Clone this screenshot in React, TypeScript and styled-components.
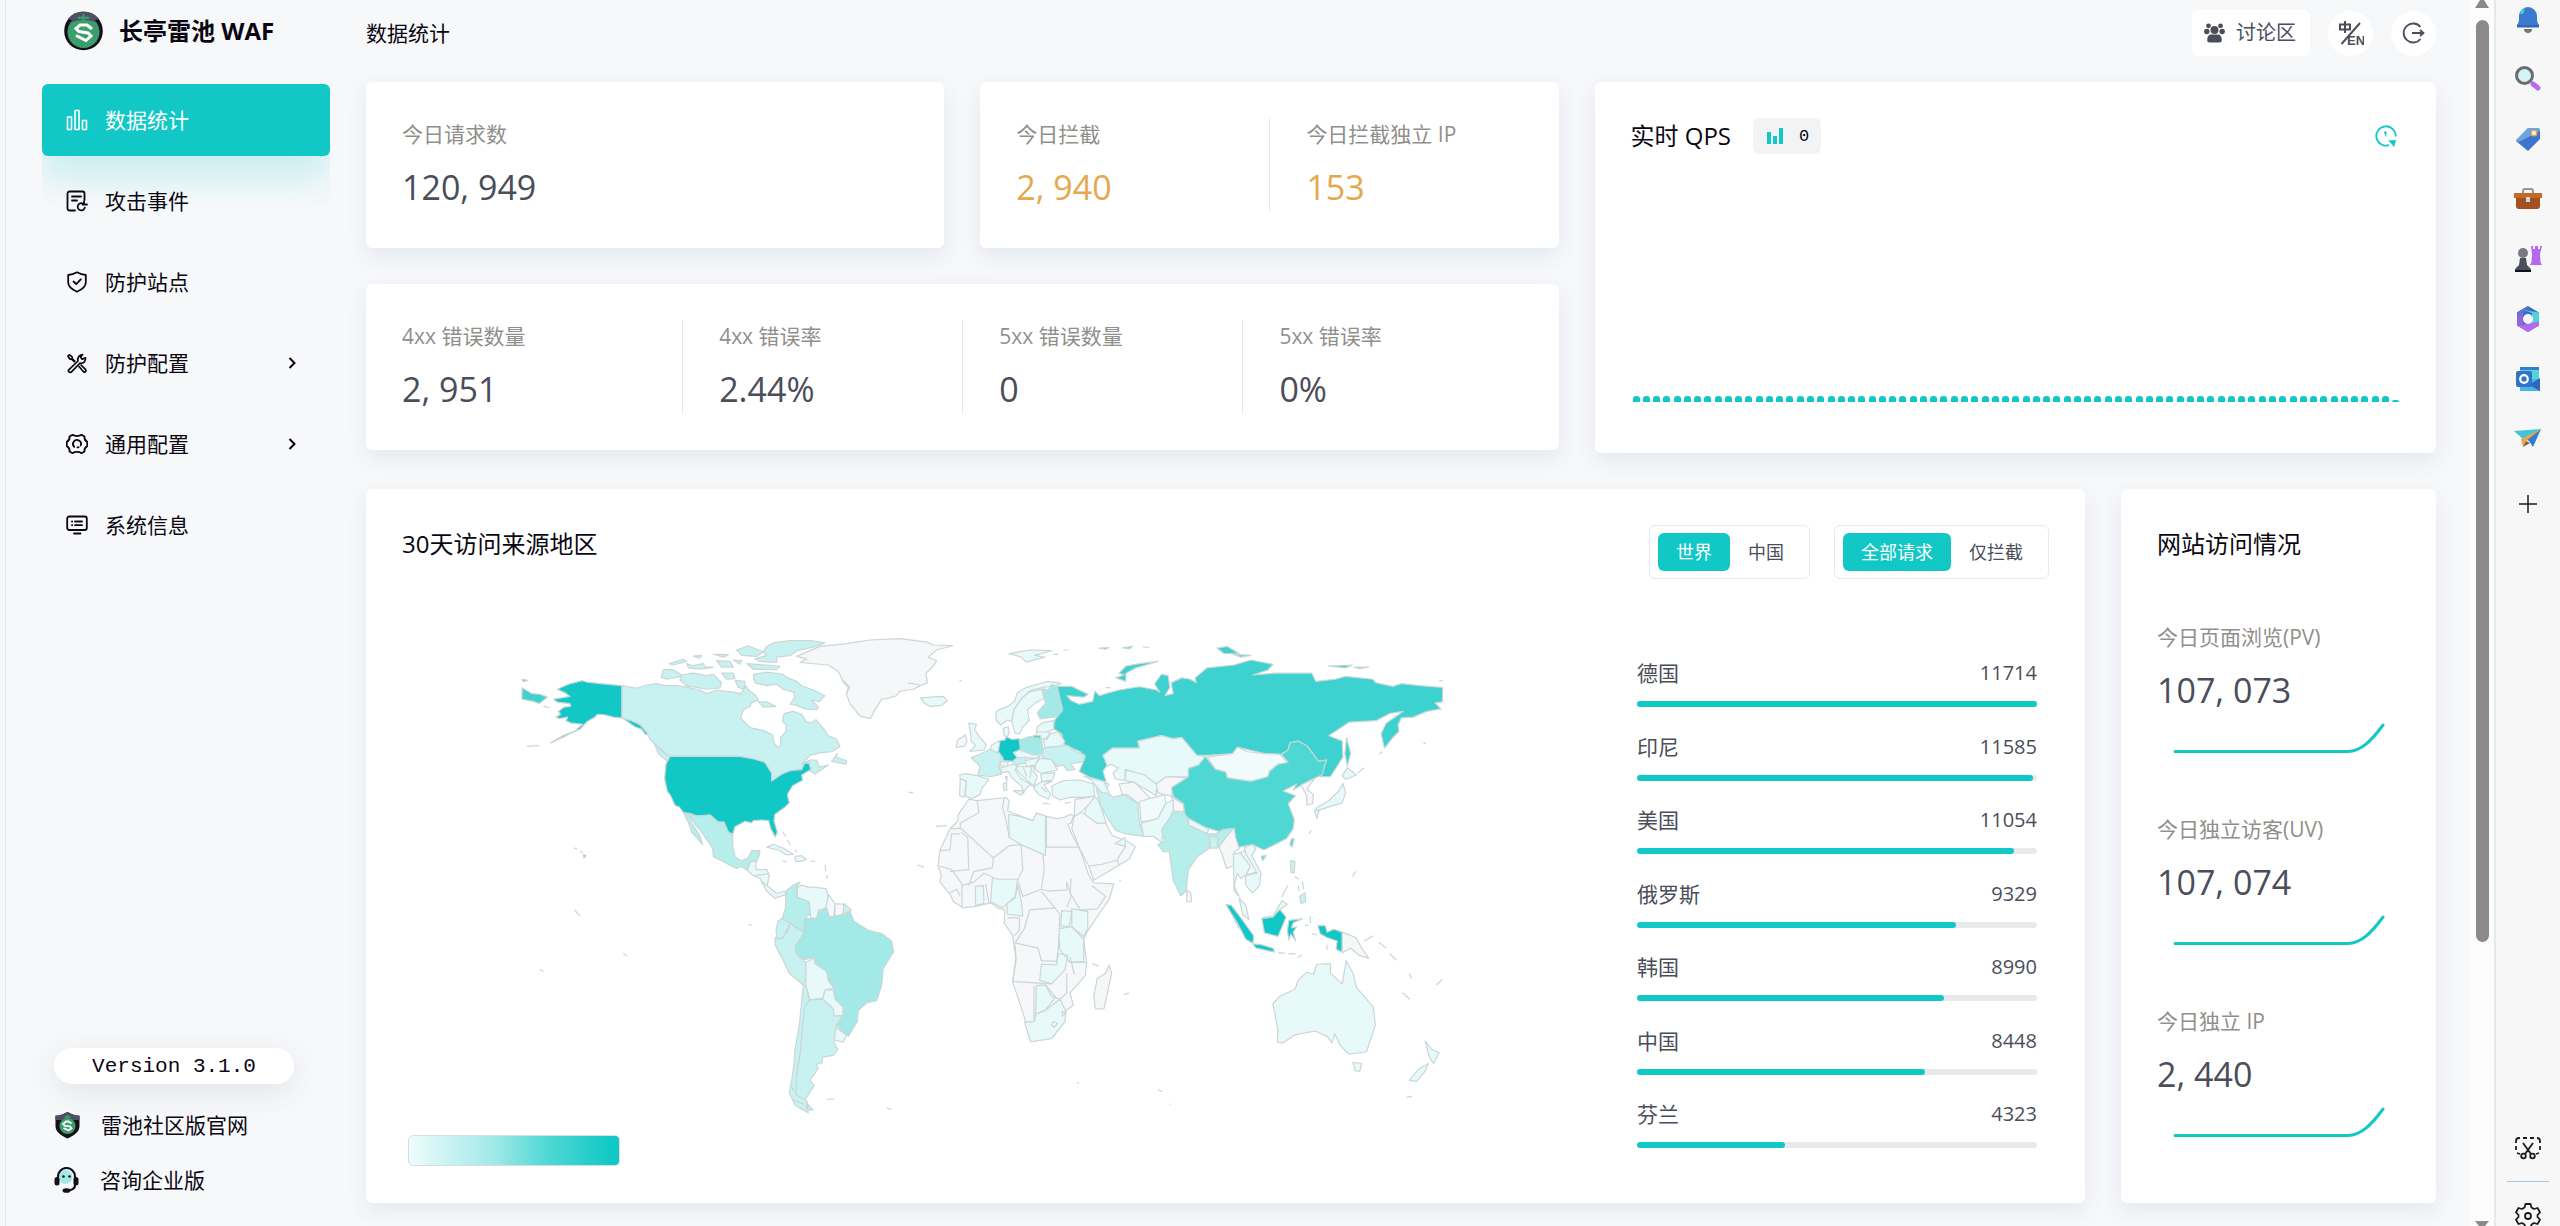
import React from "react";
import styled, { createGlobalStyle } from "styled-components";

const teal = "#11c8c6";
const ink = "#4b4e5a";
const sans = `"Open Sans", "Noto Sans CJK SC", sans-serif`;

const GlobalStyle = createGlobalStyle`
  *, *::before, *::after { box-sizing: border-box; }
  body { margin: 0; overflow: hidden; background: #f7f8fa; color: #0b0712; font-family: ${sans}; font-size: 21px; }
  button { font: inherit; color: inherit; background: none; border: 0; padding: 0; cursor: pointer; }
  a { color: inherit; text-decoration: none; }
  h1, h2, p, dl, dt, dd, ul { margin: 0; padding: 0; font-weight: 400; }
  ul { list-style: none; }
  svg { display: block; flex: none; }
`;

const Shell = styled.div`
  height: 100vh;
  display: grid;
  grid-template-columns: 325px minmax(0, 1fr) 24px 66px;
  border-left: 5px solid #f7f7f7;
  overflow: hidden;
`;

const Sidebar = styled.aside`
  display: flex;
  flex-direction: column;
  height: 100vh;
  padding: 11px 0 26px 36px;
  border-left: 1px solid #e1e8ed;
`;

const Brand = styled.a`
  display: flex;
  align-items: center;
  gap: 16px;
  height: 40px;
  margin: 0 0 33px 22px;
  font-size: 24px;
  line-height: 32px;
  font-weight: 700;
`;

const Nav = styled.nav`
  display: flex;
  flex-direction: column;
  gap: 9px;
  overflow: hidden;
`;

const NavItem = styled.button<{ $active?: boolean }>`
  display: flex;
  align-items: center;
  gap: 17px;
  height: 72px;
  padding: 0 30px 0 24px;
  border-radius: 6px;
  line-height: 32px;
  text-align: left;
  color: ${(p) => (p.$active ? "#fff" : "#0b0712")};
  background: ${(p) => (p.$active ? teal : "transparent")};
  box-shadow: ${(p) => (p.$active ? "0 22px 36px rgba(17, 200, 198, 0.2)" : "none")};
`;

const NavLabel = styled.span`
  flex: 1;
`;

const SideFoot = styled.div`
  display: flex;
  flex-direction: column;
  gap: 15px;
  margin: auto 36px 0 12px;
`;

const Version = styled.button`
  height: 36px;
  margin-bottom: 6px;
  border-radius: 18px;
  background: #fff;
  box-shadow: 0 8px 30px rgba(30, 70, 100, 0.1);
  font-family: "Liberation Mono", monospace;
  font-size: 21px;
  line-height: 38px;
`;

const FootLink = styled.a`
  display: flex;
  align-items: center;
  gap: 20px;
  height: 40px;
  line-height: 38px;
`;

const Main = styled.main`
  padding: 10px 34px 0 36px;
  height: 100vh;
  overflow: hidden;
`;

const TopBar = styled.header`
  display: flex;
  align-items: center;
  gap: 18px;
  height: 46px;
  margin-bottom: 26px;
`;

const PageTitle = styled.h1`
  flex: 1;
  font-size: 21px;
  line-height: 32px;
`;

const Forum = styled.button`
  display: flex;
  align-items: center;
  gap: 11px;
  height: 46px;
  padding: 0 14px 0 12px;
  border-radius: 6px;
  background: #fff;
  color: ${ink};
  font-size: 20px;
  line-height: 32px;
`;

const RoundButton = styled.button`
  display: grid;
  place-items: center;
  width: 45px;
  height: 45px;
  border-radius: 50%;
  background: #fff;
`;

const Grid = styled.div`
  display: grid;
  grid-template-columns: repeat(12, minmax(0, 1fr));
  gap: 36px;
  align-items: start;
`;

const Span = styled.div<{ $cols: number }>`
  grid-column: span ${(p) => p.$cols};
`;

const StatGrid = styled.div`
  display: grid;
  grid-template-columns: 1fr 1fr;
  gap: 36px;
`;

const Card = styled.section<{ $wide?: boolean }>`
  grid-column: ${(p) => (p.$wide ? "1 / -1" : "auto")};
  padding: 36px;
  border-radius: 6px;
  background: #fff;
  box-shadow: 0 8px 22px rgba(30, 70, 100, 0.09);
`;

const Stats = styled.dl`
  display: grid;
  grid-auto-flow: column;
  grid-auto-columns: minmax(0, 1fr);
`;

const StatCell = styled.div`
  & + & {
    padding-left: 36px;
    border-left: 1px solid #e7e9ec;
  }
`;

const StatLabel = styled.dt`
  color: #8f8f8c;
  font-size: 21px;
  line-height: 32px;
`;

const StatValue = styled.dd<{ $warn?: boolean }>`
  margin-top: 12px;
  color: ${(p) => (p.$warn ? "#e5a84e" : ink)};
  font-size: 34px;
  line-height: 50px;
`;

const QpsCard = styled(Card)`
  display: flex;
  flex-direction: column;
  min-height: 371px;
  padding-bottom: 51px;
`;

const CardTitle = styled.h2`
  font-size: 24px;
  line-height: 38px;
`;

const QpsHead = styled.div`
  display: flex;
  align-items: center;
  gap: 22px;
  height: 36px;
  padding-right: 3px;
`;

const QpsChip = styled.span`
  display: flex;
  align-items: center;
  gap: 16px;
  height: 36px;
  margin-right: auto;
  padding: 0 12px 0 14px;
  border-radius: 6px;
  background: #f2f3f5;
  font-family: "Liberation Mono", monospace;
  font-size: 17px;
`;

const QpsBars = styled.div`
  display: flex;
  justify-content: space-between;
  align-items: flex-end;
  margin-top: auto;
  padding-left: 2px;
`;

const QpsBar = styled.i<{ $last: boolean }>`
  width: 7px;
  height: ${(p) => (p.$last ? 2 : 6)}px;
  border-radius: 3px 3px 0 0;
  background: ${teal};
`;

const MapHead = styled.div`
  display: flex;
  align-items: flex-start;
  gap: 24px;
  height: 54px;
  margin-bottom: 31px;
`;

const MapTitle = styled(CardTitle)`
  flex: 1;
`;

const Segment = styled.div`
  display: flex;
  height: 54px;
  padding: 7px 7px 7px 8px;
  border: 1px solid #e7e9ec;
  border-radius: 6px;
`;

const SegmentButton = styled.button<{ $on?: boolean }>`
  height: 38px;
  padding: 0 18px;
  border-radius: 6px;
  font-size: 18px;
  line-height: 34px;
  color: ${(p) => (p.$on ? "#fff" : ink)};
  background: ${(p) => (p.$on ? teal : "transparent")};
`;

const MapBody = styled.div`
  display: flex;
  gap: 36px;
`;

const MapPane = styled.div`
  flex: 1;
  min-width: 0;
  & > svg {
    width: 100%;
    height: auto;
  }
`;

const Legend = styled.div`
  width: 212px;
  height: 31px;
  margin: 20px 0 1px 6px;
  border: 1px solid #d5dfe0;
  border-radius: 5px;
  background: linear-gradient(90deg, #eefcfc, #a2e9e8 40%, #50d8d4 66%, ${teal} 96%);
`;

const Ranking = styled.ul`
  display: flex;
  flex-direction: column;
  justify-content: space-between;
  width: 412px;
  padding: 47px 12px 19px 0;
`;

const RankText = styled.div`
  display: flex;
  justify-content: space-between;
  margin-bottom: 12px;
  color: ${ink};
  line-height: 32px;
`;

const RankCount = styled.span`
  font-size: 20px;
`;

const Track = styled.div`
  height: 6px;
  border-radius: 3px;
  background: #e7e9ed;
`;

const Fill = styled.div`
  height: 6px;
  border-radius: 3px;
  background: ${teal};
`;

const VisitCard = styled(Card)`
  padding-bottom: 62px;
`;

const VisitList = styled.dl`
  display: flex;
  flex-direction: column;
  gap: 56px;
  margin-top: 58px;
`;

const Spark = styled.svg`
  width: 100%;
  height: auto;
  margin-top: 6px;
`;

const ScrollBar = styled.div`
  display: flex;
  flex-direction: column;
  align-items: center;
  height: 100vh;
  background: #fcfcfc;
`;

const Thumb = styled.div`
  flex: 922;
  width: 13px;
  margin-top: 12px;
  border-radius: 7px;
  background: #8b8989;
`;

const ScrollSpace = styled.div`
  flex: 279;
`;

const Rail = styled.aside`
  display: flex;
  flex-direction: column;
  align-items: center;
  gap: 32px;
  height: 100vh;
  padding-top: 5px;
  border-left: 2px solid #e4e9ef;
  background: #f7f7f7;
`;

const RailButton = styled.button`
  display: grid;
  place-items: center;
  width: 28px;
  height: 28px;
`;

const RailFoot = styled.div`
  display: flex;
  flex-direction: column;
  align-items: center;
  gap: 20px;
  margin: auto 0 -4px;
`;

const RailLine = styled.div`
  width: 42px;
  height: 1px;
  background: #a5cbd8;
`;

/* ---------- icons ---------- */

const Icon = ({ size = 22, children, sw = 1.8 }: { size?: number; sw?: number; children: React.ReactNode }) => (
  <svg width={size} height={size} viewBox="0 0 22 22" fill="none" stroke="currentColor" strokeWidth={sw} strokeLinejoin="round" strokeLinecap="round" aria-hidden="true">
    {children}
  </svg>
);

const ChartIcon = () => (
  <Icon sw={1.6}><path d="M1.5 8h4v12.500h-4zM9 1.500h4v19H9zM16.500 11.500h4v9h-4z" /></Icon>
);
const EventIcon = () => (
  <Icon>
    <path d="M9 20.500H3.500a2 2 0 0 1-2-2v-15a2 2 0 0 1 2-2h13a2 2 0 0 1 2 2V10M6 6.500h9M6 10.500h5" />
    <path d="M17 13.600a3.600 3.600 0 1 0 1.800 4M16.500 14.500h4.500M18 11.500v3" />
  </Icon>
);
const ShieldIcon = () => (
  <Icon><path d="M11 1.300c3 1.700 5.500 2.500 8.800 2.700v7.500c0 4-3.800 7-8.800 9.300-5-2.300-8.800-5.300-8.800-9.300V4c3.300-.2 5.800-1 8.800-2.700zM7.500 10.500l2.700 2.600 4.600-4.800" /></Icon>
);
const ToolsIcon = () => (
  <Icon sw={1.7}>
    <path d="M2.500 18.200 12 9c-.8-3 .9-6.300 4.600-6.500l-2 2.800 1.500 2 3.400-1.400c.6 3.300-2.300 6-5.500 5.200L5 20.300c-1.700.5-3-.8-2.500-2.100z" />
    <path d="M8.800 9.200 6.500 7 6 4.600 3.300 2.800 2 4.200l1.600 2.600 2.500.5 2.200 2.300M13 14.500l4.500 5.300c1.500 1 3.200-.6 2.200-2.200L15 13" />
  </Icon>
);
const HexIcon = () => (
  <Icon>
    <path d="M6.500 1.800c2.200 1.700 6.800 1.700 9 0l3 1.700c-.3 2.600.4 4.200 2.700 5.400v4.200c-2.300 1.200-3 2.800-2.700 5.400l-3 1.700c-2.200-1.700-6.800-1.700-9 0l-3-1.700c.3-2.600-.4-4.200-2.700-5.400V8.900c2.300-1.200 3-2.800 2.700-5.400z" />
    <path d="M8.200 13.800a4 4 0 1 1 6.500-1.300M11.500 14.500a3 3 0 0 0 1.200-.4" />
  </Icon>
);
const SystemIcon = () => (
  <Icon>
    <rect x="1.200" y="2.500" width="19.600" height="13.500" rx="2" />
    <path d="M6 7.500h.2M9 7.500h7M6 11.200h.2M9 11.200h7M8 19.500h6.500" />
  </Icon>
);
const Chevron = () => (
  <svg width="16" height="16" viewBox="0 0 16 16" fill="none" stroke="currentColor" strokeWidth="2" aria-hidden="true"><path d="m5.500 3 5 5-5 5" /></svg>
);
const LogoIcon = () => (
  <svg width="39" height="40" viewBox="0 0 39 40" aria-hidden="true">
    <circle cx="19.500" cy="20" r="19.300" fill="#12101a" />
    <path d="M4 8C9 2 14 .8 19.500.8S30 2 35 8l-7 2H11z" fill="#4c5060" />
    <circle cx="19.500" cy="21" r="16" fill="#3a9f6c" />
    <path d="M5 13C9 7 14 5.500 19.500 5.500S30 7 34 13c-4-3-9-4-14.500-4S9 10 5 13z" fill="#4c5060" />
    <path d="M19.500 3v9M14 7h11" stroke="#3a9f6c" strokeWidth="2" />
    <path d="M28 18l-5-4h-7l-4 3.500 3 3 9 1.500 3 3-5 4.500-10-5" fill="none" stroke="#fff" strokeWidth="3" />
  </svg>
);
const BadgeIcon = () => (
  <svg width="27" height="28" viewBox="0 0 27 28" aria-hidden="true">
    <path d="M13.500 1c4 2.500 8 3.500 12 3.800V15c0 6-6 10-12 12.500C7.500 25 1.500 21 1.500 15V4.800c4-.3 8-1.300 12-3.800z" fill="#14111c" />
    <path d="M13.500 1c4 2.500 8 3.500 12 3.800V9h-24V4.800c4-.3 8-1.300 12-3.800z" fill="#4c5060" />
    <circle cx="13.500" cy="15" r="8" fill="#3a9f6c" />
    <path d="M13.500 4v4M10.500 6h6" stroke="#3a9f6c" strokeWidth="1.500" />
    <path d="M17.500 12.500l-3-2h-2.500l-3 2.500 2 1.800 5 .5 1.500 2-3 2.200-5-2.500" fill="none" stroke="#fff" strokeWidth="1.800" />
  </svg>
);
const HeadsetIcon = () => (
  <svg width="26" height="27" viewBox="0 0 26 27" fill="none" aria-hidden="true">
    <circle cx="11.500" cy="10" r="7" fill="#a2e9e8" />
    <path d="M4 12V9.500a8.500 8.500 0 0 1 17 0V18c0 3-2.500 5-7 5.500" stroke="#14111c" strokeWidth="2.200" />
    <rect x="0.500" y="10" width="5" height="8.500" rx="2.500" fill="#14111c" />
    <rect x="19.500" y="10" width="5" height="8.500" rx="2.500" fill="#14111c" />
    <ellipse cx="12.500" cy="23.500" rx="4" ry="2.300" fill="#14111c" />
    <circle cx="9.500" cy="9.500" r="1.300" fill="#14111c" /><circle cx="15.500" cy="9.500" r="1.300" fill="#14111c" />
  </svg>
);
const PeopleIcon = () => (
  <svg width="21" height="20" viewBox="0 0 21 20" fill={ink} aria-hidden="true">
    <circle cx="4.500" cy="2.800" r="2.400" /><circle cx="16.500" cy="2.800" r="2.400" /><circle cx="10.500" cy="7" r="4" />
    <circle cx="2.800" cy="8.500" r="2.700" /><circle cx="18.200" cy="8.500" r="2.700" />
    <path d="M6 11.500h9c2 1 2.800 3 2.800 5.500 0 1.800-1 2.500-2.500 2.500H5.700c-1.500 0-2.500-.7-2.500-2.500 0-2.500.8-4.500 2.800-5.500z" />
  </svg>
);
const LangIcon = () => (
  <svg width="26" height="26" viewBox="0 0 26 26" aria-hidden="true">
    <path d="M2 4.500h10v5H2zM7 1v12M3.500 24 22 3" fill="none" stroke={ink} strokeWidth="2" />
    <text x="9" y="24.500" fill={ink} fontFamily="Liberation Sans" fontWeight="700" fontSize="13">EN</text>
  </svg>
);
const ExitIcon = () => (
  <svg width="23" height="22" viewBox="0 0 23 22" fill="none" stroke={ink} strokeWidth="1.800" aria-hidden="true">
    <path d="M18.500 5a9.500 9.500 0 1 0 0 12M10 11h11M18 8l3.500 3-3.500 3" />
  </svg>
);
const RefreshIcon = () => (
  <svg width="22" height="22" viewBox="0 0 22 22" fill="none" stroke={teal} strokeWidth="1.800" aria-hidden="true">
    <path d="M14 20.200A9.700 9.700 0 1 1 20.700 11.500" />
    <path d="M8.800 6.500h2.800l-.6 6z" fill={teal} stroke="none" />
    <path d="M13 15.500l8-.5-2 7.500-1.800-3z" fill={teal} stroke="none" />
  </svg>
);
const MiniBars = () => (
  <svg width="16" height="16" viewBox="0 0 16 16" fill={teal} aria-hidden="true"><path d="M0 4h4v12H0zM6 8h4v8H6zM12 0h4v16h-4z" /></svg>
);

const apps: { name: string; art: React.ReactNode }[] = [
  { name: "通知", art: <><path d="M3 20c2-2 2-5 2-9a9 9 0 0 1 18 0c0 4 0 7 2 9z" fill="#3a7bd0" /><path d="M3 20h22v2.500H3z" fill="#2f67c0" /><path d="M6 9a8 8 0 0 1 5-6L9 9z" fill="#3fd0cf" /><path d="M10 24h8a4 4 0 0 1-8 0z" fill="#777" /></> },
  { name: "搜索", art: <><path d="m19 19 5 4" stroke="#b568f0" strokeWidth="5" strokeLinecap="round" /><circle cx="10.500" cy="10.500" r="8" fill="#d3f3f5" stroke="#6c6b70" strokeWidth="3" /></> },
  { name: "购物", art: <><path d="M14 3h9a3 3 0 0 1 3 3v8L14 26 2 16z" fill="#3a76cc" /><path d="M14 3h9a3 3 0 0 1 3 3L5 17l-3-2z" fill="#6ea4de" /><rect x="17.500" y="5.500" width="5" height="5" rx="1" fill="#fff" stroke="#e5a84e" strokeWidth="1.500" /></> },
  { name: "工具", art: <><path d="M9 9V6c0-1 1-2 2-2h6c1 0 2 1 2 2v3" fill="none" stroke="#8f9aa3" strokeWidth="2" /><path d="M0 8h28v5H0z" fill="#c06a28" /><path d="M2 13h24v8a3 3 0 0 1-3 3H5a3 3 0 0 1-3-3z" fill="#a34f1f" /><rect x="12" y="12" width="4" height="5" fill="#bfe0ea" /></> },
  { name: "游戏", art: <><path d="M17 1h2v3h2V1h3v3h2V1h2l-2 8 .5 8 1.500 3H16l1.500-3L18 9z" fill="#b568f0" /><circle cx="9" cy="8" r="5" fill="#777a80" /><path d="M6 13h6l1 7 4 4v3H1v-3l4-4z" fill="#4b4e5c" /><path d="M1 25h16v2H1z" fill="#14111c" /></> },
  { name: "Microsoft 365", art: <><path d="M14 1 25 7.500v13L14 27 3 20.500v-13z" fill="#3a6fc8" /><path d="M14 1 3 7.500v13L9 22V8z" fill="#9366dc" /><path d="M14 1 3 7.500v6L12 5z" fill="#5f74d6" /><path d="M25 7.500v10l-7 1V8L10 5z" fill="#54cfdc" /><path d="m14 27 11-6.500v-4l-11 2-10 2.500z" fill="#b568f0" /><circle cx="14" cy="14" r="5" fill="#f7f7f7" /></> },
  { name: "Outlook", art: <><path d="M6 2h19v12H6z" fill="#54d5dc" /><path d="M6 2h19v3H6z" fill="#3a7bd0" /><path d="M6 14h20v12H6z" fill="#4ab4e4" /><path d="m26 13-11 7 11 6z" fill="#2f67c0" /><rect x="2" y="6" width="16" height="16" rx="2" fill="#2f74c8" /><circle cx="10" cy="14" r="3.800" fill="none" stroke="#fff" strokeWidth="2.200" /></> },
  { name: "Drop", art: <><path d="M0 6 27 4 9 14z" fill="#44c4d8" /><path d="m27 4-8 18-4-6-4-2z" fill="#3a7bd0" /><path d="M27 4 7 14l2 8 3-6z" fill="#e5a84e" /><path d="m9 22 3-6 4 2z" fill="#8c5a30" /></> },
];

/* ---------- world map ---------- */

const none = "#f5f7f9";
const t1 = "#e7f9f9";
const t2 = "#c8f2f1";
const mid = "#b6eeec";
const t3 = "#a2e9e8";
const ru = "#3dd2cf";
const cn = "#4fd7d3";

type Land = [string, string];

const americas: Land[] = [
  [teal, "M247 226L262 230 300 234 366 240V330L340 328 318 322 292 320 285 328 262 340 240 362 215 372 190 384 152 400 188 380 225 366 248 348 215 345 198 338 203 328 178 332 168 328 182 320 175 312 192 300 212 298 210 290 172 286 160 278 185 274 210 270 195 260 172 250 205 236Z"],
  [teal, "M366 330L395 338 420 350 448 378 436 376 425 362 405 355Z M250 712L258 716 252 722Z"],
  [ru, "M66 246L95 262 120 264 142 272 118 290 100 284 66 278Z M66 222L84 225 70 229Z"],
  [t2, "M366 240L390 244 410 247 440 238 470 234 495 240 530 240 560 244 600 252 620 262 650 252 700 258 722 262 738 240 746 252 768 268 775 280 755 288 750 298 730 308 722 330 740 348 752 358 790 365 818 378 822 400 832 412 842 410 842 385 858 368 860 352 848 340 852 318 880 312 905 320 918 340 934 345 948 335 975 365 985 380 1010 390 1020 410 995 425 960 428 930 435 905 460 930 448 950 448 958 468 985 462 945 487 930 478 928 455 915 458 905 475 870 478 815 507V485L795 455 765 446 720 438H510L496 428 470 408 450 390 440 370 420 348 395 338 366 330Z"],
  [t2, "M490 195L520 195 545 210 580 205 620 212 640 208 665 232 660 246 620 250 560 240 540 225 545 214 500 222 484 216Z"],
  [t2, "M760 208L800 202 850 208 858 216 890 228 905 240 940 252 975 268 958 285 935 280 955 300 950 308 915 305 890 295 870 292 885 272 882 258 850 250 830 236 800 240 765 232Z"],
  [t2, "M820 120L870 114 930 114 975 120 940 132 890 142 870 156 830 160 830 175 780 172 765 165 800 155 790 145 800 130Z M710 140L745 128 790 145 770 158 725 155Z"],
  [t2, "M740 178L800 182 840 186 830 195 760 194Z M560 178L580 184 610 178 615 188 640 188 600 194 565 190Z M508 178L550 166 560 172 520 182Z M640 152L685 153 670 160Z M650 170L690 172 700 188 665 188Z M665 205L700 205 705 220 680 222Z M705 225L735 228 732 250 715 245Z M580 157L605 155 600 163Z M775 285L800 285 828 298 790 300Z M1012 430L1008 440 1040 450 1038 460 995 452Z M462 400L480 418 505 440 505 454 475 430Z M700 168L725 170 720 180Z"],
  [teal, "M510 438H720L765 446 795 455 815 485V507L845 488 870 478 905 475 915 456 928 458 932 475 905 490 908 505 878 520 862 545 868 568 855 580 825 600 822 618 832 650 826 664 812 640 806 618 785 616 760 618 755 624 735 620 705 635 698 657 685 650 672 622 655 622 630 602 590 605 572 598 550 595 538 580 525 575 512 548 502 535 494 500 498 460Z"],
  [mid, "M550 595L590 605 630 602 655 622 672 622 685 650 698 657 698 690 706 720 725 730 745 722 755 702 780 702 778 715 768 735 750 732 742 757 725 746 710 752 680 738 640 718 638 695 605 650 585 628 568 600 575 625 600 660 608 685 575 650 565 622Z"],
  [t1, "M742 757L752 732H768L768 755H800L808 770 802 800 830 822 855 815 858 825 825 835 800 815 780 780 760 772Z M800 692L820 684 850 695 880 712 860 714 835 700Z M885 718L905 716 920 726 905 732 888 732Z M764 772L808 766 M782 786L802 800 M848 732L860 732 M932 732H945"],
  [mid, "M858 815L880 798 900 790 888 808 892 832 928 845 930 880 914 892 912 928 895 922 870 905 846 892 856 865Z"],
  [t1, "M892 806L905 798 925 804 940 804 978 808 985 830 978 862 955 870 950 892 932 890 928 845 892 832Z"],
  [none, "M985 825L1005 850 1002 888 988 888 978 862Z M1005 850L1032 852 1030 880 1005 885Z"],
  [t2, "M1032 850L1054 868 1045 882 1030 880Z"],
  [t2, "M846 892L870 905 865 925 848 945 832 950 828 925 835 898Z M870 905L895 922 912 928 905 945 885 970 890 992 908 1008 918 1015 918 1060 910 1078 868 1045 845 1000 825 965V945L848 948Z"],
  [t3, "M914 892H950L958 872 980 864 988 888 1030 882 1050 870 1062 900 1080 910 1105 925 1145 934 1175 955 1181 985 1150 1032 1145 1080 1130 1122 1100 1128 1075 1150 1072 1180 1045 1222 1010 1192 1030 1165 1030 1140 1005 1118 1002 1085 985 1062 980 1040 945 1015 942 1000 912 1008 890 992 885 970 905 945 912 925Z"],
  [t1, "M918 1015L942 1002 945 1018 980 1040 985 1065 1002 1088 975 1092 968 1115 930 1120 918 1080Z M975 1092H1000L1005 1118 1030 1140 1028 1163 1002 1165 1000 1145 968 1118Z M1005 1195L1040 1218 1030 1238 1002 1232Z"],
  [t2, "M930 1120L968 1118 1000 1145 1002 1165H1028L1008 1192 1002 1240 1014 1258 1000 1275 968 1280 966 1298 948 1300 955 1312 930 1345 942 1360 915 1400 885 1390 890 1330 902 1260 907 1190 912 1130Z M890 1400L915 1405 940 1428 900 1425Z"],
  [t2, "M910 1078L918 1080 928 1120 914 1140 907 1200 902 1260 890 1330 888 1385 920 1402 925 1436 885 1415 868 1380 876 1340 882 1300 885 1260 898 1190Z M870 1355L882 1375 M880 1400L912 1412 M922 1404L918 1426"],
  [none, "M890 158L960 130 1040 122 1110 112 1200 108 1282 118 1300 126 1358 128 1310 140 1285 160 1310 170 1300 185 1278 205 1282 232 1262 240 1240 250 1200 255 1190 268 1160 276 1145 278 1122 312 1112 332 1080 325 1050 290 1040 265 1045 245 1030 230 1015 200 985 182 900 175 920 165Z"],
  [t1, "M1262 275L1290 272 1330 270 1342 282 1325 295 1290 298 1275 290Z"],
  ["none", "M848 650L858 662 M862 672L872 686 M885 700L892 706 M975 742L978 760 M982 770L980 780 M222 694L232 698 M240 704L248 708 M745 908L755 912 M980 1398H1002 M1160 1422L1174 1427 M80 410L118 408 M130 298L150 301 M1226 538L1240 540 M1252 742L1272 748 M1308 634L1340 632 M120 1034L130 1040 M370 990L382 998 M1378 228L1386 226 M224 868L240 886 M1030 225L1050 245 1038 262 M1225 232L1260 238"],
];

const europe: Land[] = [
  [t1, "M48 125L60 118 85 108 105 92 112 68 140 52 175 42 205 34 243 40 225 48 190 52 150 62 125 85 102 120 95 155 82 150 62 165 48 150Z"],
  [t1, "M95 155L102 120 125 85 150 65 185 58 192 85 165 100 142 120 148 150 128 172 118 192 105 190Z"],
  [t3, "M188 56L205 60 215 44 232 50 240 85 248 118 232 140 180 147 172 128 196 100 192 78Z"],
  [t1, "M188 158L220 152 222 178 200 186 170 186 172 170Z M170 186L200 186 212 190 200 208 182 205 168 195Z M212 190L235 186 255 215 245 228 195 232 190 212Z"],
  [t3, "M118 210L150 200 184 206 190 250 160 255 118 240Z"],
  [ru, "M160 197H182V205L160 203Z"],
  [t1, "M70 175L85 170 88 190 80 202 72 195Z M35 225L58 212 60 235 50 248 32 238Z M98 248L120 240 160 255 185 255 170 265 110 262Z M135 272L180 262 165 285 140 290Z M60 275L85 275 82 290 62 288Z"],
  [teal, "M60 212L75 210 78 200 95 208 118 206 121 238 100 248 112 264 98 274 70 272 68 262 55 245Z"],
  [t2, "M98 274L110 264 138 262 135 280 100 284Z"],
  [t1, "M60 294L82 288 100 282 112 288 105 300 122 325 155 345 142 350 130 370 126 350 95 322 85 305 65 308Z M100 362L130 362 124 376Z M70 340L80 338 80 360 72 362Z M76 320L82 320 80 335Z"],
  [t1, "M112 288L140 290 165 290 160 305 172 318 165 340 160 348 132 322 110 300Z M165 285L180 265 215 268 232 300 185 310 168 302Z M182 312L225 308 218 330 185 335Z M160 350L185 335 215 335 192 345 212 372 205 388 178 375 165 360Z"],
  ["none", "M130 292L140 320 M155 292L150 325 M190 400L210 402 M255 400L272 396 M184 352L200 366"],
  [t2, "M190 235L245 228 262 226 290 246 315 255 310 275 272 282 285 298 262 302 250 285 232 290 215 270 188 262Z"],
  [t1, "M215 348L250 332 300 330 340 342 345 378 310 382 270 382 240 390 218 378Z M310 318L372 335 388 370 365 368 345 345 332 328Z"],
  [none, "M285 388L325 382 345 378 325 405 305 425 282 440Z"],
];

const eastern: Land[] = [
  [none, "M85 558L110 562 195 553 205 562 200 590 245 608 275 618 285 597 312 605 345 612 370 608 385 600 395 605 388 625 378 628 392 660 415 700 440 770 455 792 514 795 500 840 470 880 435 930 425 950 434 1015 430 1052 385 1100 394 1135 372 1150 370 1180 330 1228 268 1237 255 1185 240 1140 215 1070 225 1010 215 940 190 905 192 868 170 862 150 848 105 858 68 862 40 845 30 825 0 790 4 770 -6 745 0 700 30 640 52 620 55 600Z"],
  [t1, "M203 600L245 608 275 618 285 597 312 605V715L240 685 205 665Z M155 778L172 782 230 782 222 830 185 862 150 845Z M230 800L240 840 245 885 200 880 198 850 222 835Z M105 802L128 800 130 850 105 855Z M390 865L437 872 437 920 425 942 390 915Z M360 870L390 872 382 915 357 912Z M350 920L390 915 425 950 425 1012 385 1015 355 980Z M300 1020L345 1022 350 990 378 995 370 1035 330 1075 295 1065Z M285 1080L312 1078 342 1112 310 1150 283 1160Z"],
  [t1, "M250 1182L280 1180 283 1160 310 1150 355 1118 372 1150 370 1180 330 1228 268 1237Z"],
  [none, "M335 1180L348 1186 338 1196 330 1190Z M362 1152L372 1156 362 1165Z M265 868L340 862 355 880 350 975 345 1012 300 1010 290 975 222 960 250 920Z M500 1022L508 1045 485 1145 460 1145 455 1110 465 1060 490 1045Z"],
  ["none", "M62 640L158 722 205 688 240 685 M205 665L195 615 185 580 190 555 M62 650L82 665 85 755 30 760 M60 655L34 655 30 700 0 702 M110 562L115 595 60 625V640L30 640 M158 722L155 750 100 760 85 800 M240 685L245 755 230 785 M315 605V692H408 M305 715L308 755 300 810 245 830 232 790 M300 810L320 815 375 812V790L388 830 375 860 M388 780L385 820 415 868 465 865 490 830 450 800 M300 815L340 862 M222 965L225 1000 215 1068 330 1075 M278 1080V1180 M375 1045V1100L355 1118 330 1110 312 1078 M385 1015H432 M385 1000L398 1050 M-2 745L35 755 65 795 65 860 M65 800L100 790 130 765 155 775 M135 795L145 850 M200 890L235 890 235 925 220 940 M30 820L50 810 60 830"],
  [none, "M400 590L430 600 465 625 490 625 510 660 552 675 578 690 560 725 525 745 455 785 440 745 415 700 390 640Z M440 745L480 740 525 728 530 745 M525 725L550 690"],
  [t1, "M518 682L548 665V690Z M440 555L465 555 478 585 492 625 465 625 428 600Z"],
  [t1, "M85 345L108 348 102 362 118 385 137 405 130 420 88 424 105 408 92 395 90 370Z"],
  [none, "M52 392L75 378 80 395 72 410 48 412Z M60 500L78 508 72 552 58 548Z"],
  [t1, "M58 490L75 486 110 492 145 502 125 525 118 545 95 556 80 552 75 545 78 508 60 500Z"],
  [t2, "M118 432L148 418 180 430 182 450 174 465 182 488 150 495 112 490 118 465 92 442Z"],
  [ru, "M343 242L390 242 438 264 425 272 375 268 388 282 412 292 452 284 458 255 472 268 490 262 530 252 590 243 640 252 650 258 635 235 655 208 675 212 680 245 665 268 690 262 684 232 715 218 740 222 758 232 755 218 790 190 870 182 920 168 985 180 970 196 925 210 990 205 1100 205 1112 228 1170 222 1200 214 1280 222 1290 232 1340 242 1365 234 1420 240 1487 245V285L1465 288 1482 305 1440 312 1400 328 1365 330 1355 350 1358 368 1340 385 1315 415 1305 375 1320 345 1370 312 1330 318 1290 338 1210 342 1150 380 1190 395 1192 440 1155 495H1125L1143 448 1120 452 1085 408 1060 395 1035 400 1030 420 1010 432 960 430 880 412 870 430 790 435 760 435 715 385 690 388 655 380 585 395 590 415 510 415 482 435 495 462 482 480 492 510 440 495 412 480 430 440 415 425 368 405 360 375 335 360 340 335 362 310 352 280Z"],
  [ru, "M520 218L545 210 530 205 550 185 590 178 645 172 580 190 550 205 550 228Z M820 135L850 130 885 150 840 150Z M865 152L920 155 890 160Z M1150 185L1220 182 1200 190Z M1225 188L1268 188 1240 192Z M1203 385L1215 430 1205 465 1198 430Z M470 135L500 133 490 138Z M540 134L570 130 560 137Z M600 131L620 133 M490 245L505 246 M1476 228L1487 225"],
  [t1, "M205 150L265 140 330 142 280 155 310 160 255 174 240 160Z"],
  [t1, "M482 435L510 415 590 415 585 395 655 380 690 388 715 385 760 435 785 438 770 460 735 472 735 495 670 495 640 515 605 490 550 475 548 505 520 502 512 485 528 470 505 460 495 465Z M548 475L605 490 640 515 665 500 680 512 640 530 640 548 600 525 575 512 548 505Z"],
  [none, "M530 515L575 510 622 555 585 570 555 545 540 548Z M640 515L670 495 735 498 690 525 685 550 645 540Z M685 550L720 572 724 595 690 590Z M460 510L500 515 490 535 462 525Z"],
  ["#f1fbfb", "M790 440L865 430 880 412 910 425 960 430 1005 432 1030 455 1000 460 975 480 970 495 920 508 850 498 845 482 815 474Z"],
  [cn, "M785 438L815 474 845 482 850 498 920 508 970 495 975 480 1000 460 1030 455 1010 432 1030 420 1035 400 1060 395 1085 408 1120 452 1143 448 1130 490 1100 502 1045 532 1055 515 1015 535 1052 548 1030 570 1048 615 1045 640 1025 668 990 685 958 700 925 685 885 692 868 665 865 640 825 648 780 635 725 605 720 570 690 550 685 525 735 495 735 472 765 462Z M950 718L965 715 955 730Z M1040 668L1048 668 1042 692 1035 685Z"],
  [none, "M1068 518L1108 500 1085 530 1105 545 1102 570 1085 574 1085 548Z"],
  [t1, "M1192 513L1200 540 1190 568 1165 575 1115 590 1112 583 1150 562 1180 535Z M1205 470L1232 490 1200 502 1190 492Z M1108 590L1122 588 1115 612Z M1130 585L1142 584"],
  [t2, "M462 530L490 535 512 552 545 545 585 570 590 625 604 662 550 655 520 645 495 610 478 580Z"],
  ["#f1fbfb", "M590 565L620 556 665 545 668 570 645 612 595 622Z"],
  [t1, "M668 570L690 560 690 590 665 640 655 678 632 662 602 662 595 625 645 612Z M735 612L795 642 790 655 735 630Z"],
  [mid, "M690 595L720 592 735 615 735 630 790 655 815 655 840 642 865 640 850 665 825 692 815 662 797 665V695L760 720 735 755 728 815 712 828 690 785 678 705H660L645 685 665 675 655 645Z"],
  [t2, "M797 660L822 665 820 695 800 695Z"],
  [none, "M730 812L742 820 744 845 730 845Z M870 638L875 665 885 695 868 710 876 740 848 752 832 705 825 692 850 660Z M888 708L905 700 922 715 940 760 905 772 918 745Z"],
  [t1, "M868 712L888 708 918 745 905 770 890 780 880 765 870 800 885 830 870 815Z M900 692L925 685 935 697 922 715 950 765 945 800 925 820 905 800 903 772 938 765 920 735 905 712Z M885 835L905 855 914 895 895 880Z M952 890L985 885 1012 842 1027 852 1005 868 985 890 960 895Z"],
  [teal, "M846 853L862 855 890 890 928 940 926 962 905 950 880 905Z M925 963L950 965 985 975 990 986 935 975Z M952 892L985 888 1005 866 1024 888 1012 915 1000 942 960 932Z M1032 897L1072 893 1045 904 1040 918 1055 915 1045 930 1052 955 1038 935 1032 952 1028 925Z M1118 912L1140 912 1145 930 1165 922 1190 930V986L1172 978 1175 955 1145 945 1125 935Z M1058 1002L1070 994 M1095 885L1097 905"],
  [none, "M1190 930L1230 945 1250 978 1268 1003 1240 995 1215 975 1190 988Z M1255 955L1282 940"],
  [t2, "M1037 730L1050 732 1048 765 1038 762Z M1064 830L1080 820 1082 845 1068 850Z"],
  ["none", "M1050 775L1062 782 M1072 788L1076 810 M1060 800L1062 815 M1010 832L1030 798 M1000 988L1020 989 M1030 991L1052 990 M1145 980V965 M1080 912L1090 910 M1100 935L1115 937 M865 885L885 920 M1298 958L1320 975 M1330 990L1350 1008 M1388 1045L1395 1060 M1368 1100L1390 1118 M1468 1078L1487 1062 M1235 485L1255 470 M1300 432L1308 425 M1092 655L1098 645 M1220 775L1230 760 M545 1105L560 1100 M645 1372L658 1376 M450 1018L470 1026 M365 140H380 M350 152H335 M535 786H530 M405 1352H412 M680 1412H684 M1380 1392L1396 1390 M1430 402L1438 400"],
  [t1, "M985 1130L1005 1110 1050 1090 1060 1065 1085 1042 1105 1048 1115 1020 1155 1018 1155 1045 1190 1075 1202 1010 1222 1045 1232 1085 1282 1140 1288 1190 1262 1265 1210 1272 1185 1248 1168 1215 1160 1240 1145 1222 1110 1207 1050 1218 1015 1240 998 1238 1000 1205Z M1222 1295L1247 1298 1242 1320 1228 1318Z M1435 1235L1455 1258 1477 1268 1460 1298 1448 1280Z M1445 1298L1435 1320 1410 1348 1388 1345 1415 1315Z"],
];

const layers: { move: string; lands: Land[] }[] = [
  { move: "translate(500 600) scale(0.3333 0.3571)", lands: americas },
  { move: "translate(940 600) scale(0.338 0.3571)", lands: eastern },
  { move: "translate(980 670) scale(0.3333)", lands: europe },
];

const WorldMap = () => (
  <svg viewBox="402 610 1199 505" role="img" aria-label="30天访问来源地区">
    {layers.map((layer) => (
      <g key={layer.move} transform={layer.move} stroke="#cbd6d7" strokeWidth="1.2" strokeLinejoin="round">
        {layer.lands.map(([fill, d]) => (
          <path key={d} d={d} fill={fill} vectorEffect="non-scaling-stroke" />
        ))}
      </g>
    ))}
  </svg>
);

/* ---------- data ---------- */

const menu = [
  { label: "数据统计", icon: <ChartIcon />, active: true },
  { label: "攻击事件", icon: <EventIcon /> },
  { label: "防护站点", icon: <ShieldIcon /> },
  { label: "防护配置", icon: <ToolsIcon />, more: true },
  { label: "通用配置", icon: <HexIcon />, more: true },
  { label: "系统信息", icon: <SystemIcon /> },
];

const errors = [
  ["4xx 错误数量", "2, 951"],
  ["4xx 错误率", "2.44%"],
  ["5xx 错误数量", "0"],
  ["5xx 错误率", "0%"],
];

const ranking: [string, number][] = [
  ["德国", 11714],
  ["印尼", 11585],
  ["美国", 11054],
  ["俄罗斯", 9329],
  ["韩国", 8990],
  ["中国", 8448],
  ["芬兰", 4323],
];

const visits = [
  ["今日页面浏览(PV)", "107, 073"],
  ["今日独立访客(UV)", "107, 074"],
  ["今日独立 IP", "2, 440"],
];

const Stat = ({ label, value, warn }: { label: string; value: string; warn?: boolean }) => (
  <StatCell>
    <StatLabel>{label}</StatLabel>
    <StatValue $warn={warn}>{value}</StatValue>
  </StatCell>
);

export default function App() {
  return (
    <>
      <GlobalStyle />
      <Shell>
        <Sidebar>
          <Brand href="#"><LogoIcon />长亭雷池 WAF</Brand>
          <Nav>
            {menu.map((m) => (
              <NavItem key={m.label} $active={m.active}>
                {m.icon}
                <NavLabel>{m.label}</NavLabel>
                {m.more && <Chevron />}
              </NavItem>
            ))}
          </Nav>
          <SideFoot>
            <Version>Version 3.1.0</Version>
            <FootLink href="#"><BadgeIcon />雷池社区版官网</FootLink>
            <FootLink href="#"><HeadsetIcon />咨询企业版</FootLink>
          </SideFoot>
        </Sidebar>

        <Main>
          <TopBar>
            <PageTitle>数据统计</PageTitle>
            <Forum><PeopleIcon />讨论区</Forum>
            <RoundButton aria-label="语言"><LangIcon /></RoundButton>
            <RoundButton aria-label="退出"><ExitIcon /></RoundButton>
          </TopBar>

          <Grid>
            <Span $cols={7}>
              <StatGrid>
                <Card>
                  <Stats><Stat label="今日请求数" value="120, 949" /></Stats>
                </Card>
                <Card>
                  <Stats>
                    <Stat label="今日拦截" value="2, 940" warn />
                    <Stat label="今日拦截独立 IP" value="153" warn />
                  </Stats>
                </Card>
                <Card $wide>
                  <Stats>
                    {errors.map(([label, value]) => <Stat key={label} label={label} value={value} />)}
                  </Stats>
                </Card>
              </StatGrid>
            </Span>

            <Span $cols={5}>
              <QpsCard>
                <QpsHead>
                  <CardTitle>实时 QPS</CardTitle>
                  <QpsChip><MiniBars />0</QpsChip>
                  <button aria-label="刷新"><RefreshIcon /></button>
                </QpsHead>
                <QpsBars>
                  {Array.from({ length: 75 }, (_, i) => <QpsBar key={i} $last={i === 74} />)}
                </QpsBars>
              </QpsCard>
            </Span>

            <Span $cols={10}>
              <Card>
                <MapHead>
                  <MapTitle>30天访问来源地区</MapTitle>
                  <Segment>
                    <SegmentButton $on>世界</SegmentButton>
                    <SegmentButton>中国</SegmentButton>
                  </Segment>
                  <Segment>
                    <SegmentButton $on>全部请求</SegmentButton>
                    <SegmentButton>仅拦截</SegmentButton>
                  </Segment>
                </MapHead>
                <MapBody>
                  <MapPane>
                    <WorldMap />
                    <Legend />
                  </MapPane>
                  <Ranking>
                    {ranking.map(([name, count]) => (
                      <li key={name}>
                        <RankText><span>{name}</span><RankCount>{count}</RankCount></RankText>
                        <Track><Fill style={{ width: `${(count / ranking[0][1]) * 100}%` }} /></Track>
                      </li>
                    ))}
                  </Ranking>
                </MapBody>
              </Card>
            </Span>

            <Span $cols={2}>
              <VisitCard>
                <CardTitle>网站访问情况</CardTitle>
                <VisitList>
                  {visits.map(([label, value]) => (
                    <div key={label}>
                      <StatLabel>{label}</StatLabel>
                      <StatValue>{value}</StatValue>
                      <Spark viewBox="0 0 243 36" fill="none" stroke={teal} strokeWidth="3" strokeLinecap="round" aria-hidden="true">
                        <path d="M18 30.500H191C204 30.500 215 19 226 4" />
                      </Spark>
                    </div>
                  ))}
                </VisitList>
              </VisitCard>
            </Span>
          </Grid>
        </Main>

        <ScrollBar aria-hidden="true">
          <svg width="16" height="8" viewBox="0 0 16 8"><path d="M1 8 6 0h4l5 8z" fill="#8b8989" /></svg>
          <Thumb />
          <ScrollSpace />
          <svg width="14" height="5" viewBox="0 0 14 5"><path d="M0 0h14l-4 5H4z" fill="#8b8989" /></svg>
        </ScrollBar>

        <Rail>
          {apps.map((r) => (
            <RailButton key={r.name} aria-label={r.name}>
              <svg width="28" height="28" viewBox="0 0 28 28">{r.art}</svg>
            </RailButton>
          ))}
          <RailButton aria-label="添加">
            <svg width="28" height="28" viewBox="0 0 28 28" stroke="#1c1b22" strokeWidth="1.500"><path d="M5 19h18M14 10v18" /></svg>
          </RailButton>
          <RailFoot>
            <RailButton aria-label="截图">
              <svg width="28" height="28" viewBox="0 0 28 28" fill="none" stroke="#1c1b22" strokeWidth="1.800">
                <path d="M2 10V8a3 3 0 0 1 3-3h1M9 5h4M16 5h4M23 5a3 3 0 0 1 3 3v2M2 13v4M26 13v4M3 20l3 1M25 20l-3 1M9 10l8 11M19 10l-8 11" />
                <circle cx="9.500" cy="23" r="2.300" /><circle cx="18.500" cy="23" r="2.300" />
              </svg>
            </RailButton>
            <RailLine />
            <RailButton aria-label="设置">
              <svg width="28" height="28" viewBox="0 0 28 28" fill="none" stroke="#1c1b22" strokeWidth="1.800" strokeLinejoin="round">
                <path d="M11.500 2h5l1 3.500 2.500 1.500 3.500-1 2.500 4.300-2.500 2.700v2l2.500 2.700L23.500 22l-3.500-1-2.500 1.500-1 3.500h-5l-1-3.500L8 21l-3.500 1L2 17.700 4.500 15v-2L2 10.300 4.500 6 8 7l2.500-1.500z" />
                <circle cx="14" cy="14" r="3" />
              </svg>
            </RailButton>
          </RailFoot>
        </Rail>
      </Shell>
    </>
  );
}
